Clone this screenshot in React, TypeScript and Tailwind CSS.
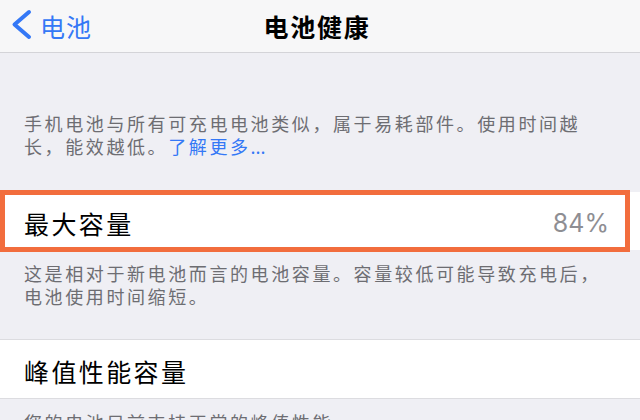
const BackChevron = () => (
  <svg width="40" height="53" viewBox="0 0 40 53" className="shrink-0">
    <path d="M29 12 L14.5 24.5 L29 37" fill="none" stroke="#3478f6" strokeWidth="4" strokeLinecap="round" strokeLinejoin="round" />
  </svg>
);

const Footnote = ({ children, className = '' }: { children: React.ReactNode; className?: string }) => (
  <p className={`pl-[24px] pr-[16px] text-[18px] leading-[23px] tracking-[2.6px] text-[#6d6d72] whitespace-nowrap ${className}`}>
    {children}
  </p>
);

const App = () => {
  return (
    <div className="w-[640px] h-[420px] overflow-hidden bg-[#efeff4] font-['Noto_Sans_CJK_SC',sans-serif]">
      <header className="h-[53px] bg-[#f7f7f8] border-b border-[#d4d4d8] grid grid-cols-[1fr_auto_1fr] items-center">
        <div className="flex items-center h-full">
          <BackChevron />
          <span className="text-[25px] tracking-[1px] text-[#3478f6] leading-none">电池</span>
        </div>
        <h1 className="text-[25px] font-semibold tracking-[1.8px] text-black leading-none pr-[6px]">电池健康</h1>
        <div />
      </header>

      <Footnote className="pt-[59px]">
        手机电池与所有可充电电池类似，属于易耗部件。使用时间越
        <br />
        长，能效越低。<span className="text-[#3478f6]">了解更多<span className="tracking-normal">...</span></span>
      </Footnote>

      <div className="relative mt-[34px] h-[58px] bg-white flex items-center justify-between pl-[24px] pr-[31px]">
        <span className="text-[25px] tracking-[2.4px] text-black leading-none pt-[4px]">最大容量</span>
        <span className="font-['Inter',sans-serif] text-[25px] text-[#8e8e93] leading-none pt-[4px]">84%</span>
        <div className="absolute left-0 top-[-2px] bottom-[-2px] w-[630px] border-[5px] border-[#f26d3d] pointer-events-none" />
      </div>

      <Footnote className="pt-[12px]">
        这是相对于新电池而言的电池容量。容量较低可能导致充电后，
        <br />
        电池使用时间缩短。
      </Footnote>

      <div className="mt-[31px] h-[60px] bg-white border-y border-[#dcdce0] flex items-center pl-[24px]">
        <span className="text-[25px] tracking-[2.4px] text-black leading-none pt-[4px]">峰值性能容量</span>
      </div>

      <Footnote className="pt-[12px]">您的电池目前支持正常的峰值性能。</Footnote>
    </div>
  );
};

export default App;
